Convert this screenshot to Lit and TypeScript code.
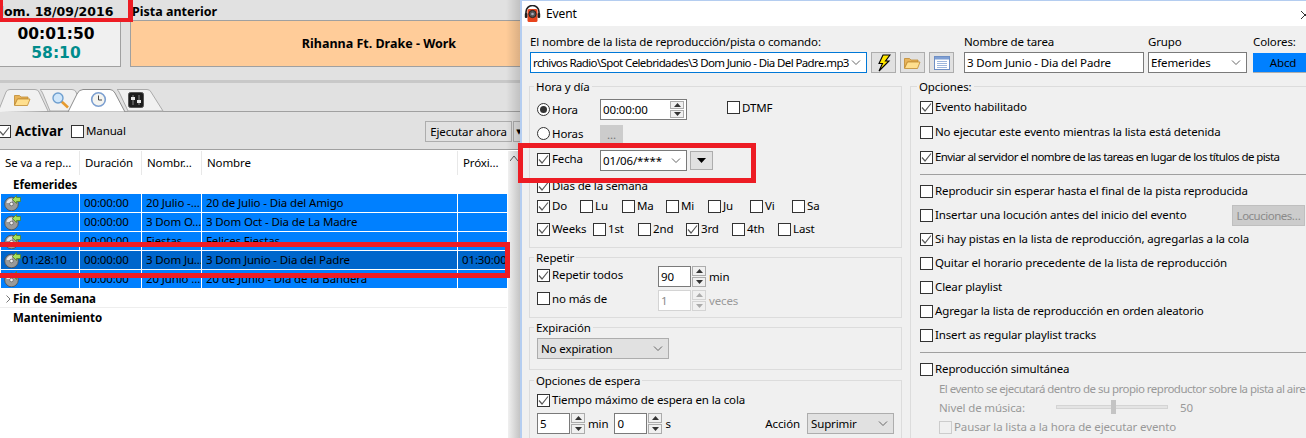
import { LitElement, html, css, svg } from 'lit';
import { customElement } from 'lit/decorators.js';

const TICK = html`<svg width="11" height="11" viewBox="0 0 11 11"><path d="M1 5.5 L4 9 L10 1.5" fill="none" stroke="#5a5a5a" stroke-width="1.2"/></svg>`;
const CHEVRON = html`<svg class="chev" width="10" height="6" viewBox="0 0 10 6"><path d="M1 .5 L5 4.5 L9 .5" fill="none" stroke="#666" stroke-width="1"/></svg>`;
const DISC = html`<svg class="disc" width="17" height="16" viewBox="0 0 17 16">
  <circle cx="7.5" cy="9" r="6.8" fill="#9a9a9a" stroke="#4c4c4c" stroke-width=".8"/>
  <path d="M2.5 8 A5.5 5.5 0 0 1 8 3.5 L8 7 A2 2 0 0 0 6 8 Z" fill="#e4e4e4"/>
  <circle cx="7.5" cy="9" r="1.8" fill="#f4f4f4" stroke="#4c4c4c" stroke-width=".6"/>
  <path d="M8.5 4.5 L12.5 .5 L12.5 2.5 L16.5 2.5 L16.5 6.5 L12.5 6.5 L12.5 8.5 Z" fill="#a6e05a" stroke="#4d7a1c" stroke-width=".7"/>
</svg>`;

const folderIcon = svg`<path d="M.5 2.5 L5.5 2.5 L7 4 L14 4 L14 6 L3.5 6 L.5 12 Z" fill="#e8b45a" stroke="#c08a30" stroke-width=".8"/>
  <path d="M3.5 6 L16 6 L13.5 12.5 L.5 12.5 Z" fill="#ffdf8e" stroke="#c08a30" stroke-width=".8"/>`;

const TABS = html`<svg class="tabs" width="170" height="23" viewBox="0 0 170 23">
  <path d="M-2 23 L6 3 Q7 .5 10 .5 L35 .5 Q38 .5 39 3 L48 22" fill="#f1f1f1" stroke="#ababab"/>
  <path d="M40 .5 L72 .5 Q75 .5 76 3 L84 22 L50 22 L43 5 Q41 .5 40 .5 Z" fill="#f1f1f1" stroke="#ababab"/>
  <path d="M117 .5 L147 .5 Q150 .5 151 3 L163 22 L128 22 L120 5 Q118 .5 117 .5 Z" fill="#f1f1f1" stroke="#ababab"/>
  <path d="M68 23 L77 5 Q79 .5 83 .5 L110 .5 Q113 .5 115 4 L125 23 Z" fill="#fff" stroke="#8c8c8c"/>
  <g transform="translate(14 4)">${folderIcon}</g>
  <g transform="translate(52 3)">
    <path d="M9 9 L16 15.5" stroke="#e69a2e" stroke-width="2.6"/>
    <circle cx="6" cy="6" r="5" fill="#cfe6fa" stroke="#6f9fcf" stroke-width="1.4"/>
  </g>
  <g transform="translate(91 3)">
    <circle cx="7.5" cy="7.5" r="6.8" fill="#f4f4f0" stroke="#7c9fd0" stroke-width="1.6"/>
    <path d="M7.5 3.5 L7.5 8 L11 8" fill="none" stroke="#444" stroke-width="1"/>
  </g>
  <g transform="translate(128 3)">
    <rect x=".5" y=".5" width="15" height="15" rx="2" fill="#1d1d1d" stroke="#555"/>
    <path d="M5 3 V13 M11 3 V13" stroke="#888" stroke-width="1"/>
    <rect x="3" y="5" width="4" height="3" fill="#e6e6e6"/>
    <rect x="9" y="8" width="4" height="3" fill="#e6e6e6"/>
  </g>
</svg>`;

const BOLT = html`<svg width="14" height="18" viewBox="0 0 14 18"><path d="M6 1 L13 1 L8.5 7 L12 7 L2 17 L5.5 9.5 L2 9.5 Z" fill="#ffe600" stroke="#000" stroke-width="1.1"/></svg>`;
const FOLDER = html`<svg width="17" height="14" viewBox="0 0 17 14">${folderIcon}</svg>`;
const LIST = html`<svg width="16" height="14" viewBox="0 0 16 14">
  <rect x=".5" y=".5" width="15" height="13" fill="#fff" stroke="#6e8fc4"/>
  <rect x="1" y="1" width="14" height="2.5" fill="#7f9fd4"/>
  <path d="M3 5.5 H13 M3 7.5 H13 M3 9.5 H13 M3 11.5 H13" stroke="#9db6dc"/>
</svg>`;
const HEADSET = html`<svg width="17" height="18" viewBox="0 0 17 18">
  <path d="M2 10 V7 A6.5 6.5 0 0 1 15 7 V10" fill="none" stroke="#222" stroke-width="1.6"/>
  <rect x="3.5" y="4" width="10" height="13" rx="1.5" fill="#e8441c"/>
  <circle cx="8.5" cy="9" r="3.6" fill="#555" stroke="#222"/>
  <circle cx="8.5" cy="9" r="1.3" fill="#aab"/>
  <rect x=".8" y="8" width="2.6" height="5" rx="1" fill="#222"/>
  <rect x="13.6" y="8" width="2.6" height="5" rx="1" fill="#222"/>
</svg>`;

type Row = { icon?: string; dur: string; file: string; name: string; next?: string; sel?: boolean };
const ROWS: Row[] = [
  { dur: '00:00:00', file: '20 Julio -…', name: '20 de Julio - Dia del Amigo' },
  { dur: '00:00:00', file: '3 Dom O…', name: '3 Dom Oct - Dia de La Madre' },
  { dur: '00:00:00', file: 'Fiestas', name: 'Felices Fiestas' },
  { icon: '01:28:10', dur: '00:00:00', file: '3 Dom Ju…', name: '3 Dom Junio - Dia del Padre', next: '01:30:00', sel: true },
  { dur: '00:00:00', file: '20 Junio …', name: '20 de Junio - Dia de la Bandera' },
];

@customElement('app-root')
export class AppRoot extends LitElement {
  static styles = css`
    :host {
      display: block;
      position: relative;
      width: 1306px;
      height: 438px;
      overflow: hidden;
      font-family: "Noto Sans", "DejaVu Sans", sans-serif;
      font-size: 11.5px;
      letter-spacing: -.13px;
      color: #000;
      background: #f0f0f0;
    }
    * { box-sizing: border-box; }
    .app { display: flex; height: 438px; }

    /* left: the playlist window behind the dialog */
    .left { width: 520px; flex: none; background: #e1e1e1; overflow: hidden; display: flex; flex-direction: column; position: relative; }
    .shade { position: absolute; top: 0; right: 0; width: 14px; height: 150px; background: linear-gradient(to right, rgba(0,0,0,0), rgba(0,0,0,.14)); }
    .head { height: 20px; flex: none; display: flex; align-items: center; font-weight: bold; font-size: 12.5px; letter-spacing: 0; white-space: nowrap; padding-top: 3px; }
    .date { width: 137px; flex: none; margin-left: -5px; font-family: "DejaVu Sans", sans-serif; }
    .boxes { height: 47px; flex: none; display: flex; gap: 9px; }
    .time { width: 122px; flex: none; margin-left: -1px; background: #f0f0f0; border: 1px solid #a0a0a0; display: flex; flex-direction: column; align-items: center; font-family: "DejaVu Sans", sans-serif; font-weight: bold; font-size: 15.5px; letter-spacing: 0; line-height: 19px; padding: 4px 8px 0 0; }
    .time .rest { color: #008c8c; }
    .track { width: 498px; flex: none; background: #ffcc99; border: 1px solid #a0a0a0; display: flex; align-items: center; justify-content: center; font-weight: bold; font-size: 12.5px; letter-spacing: 0; }
    .split { height: 3px; flex: none; margin: 13px 0 6px; background: #c8c8c8; }
    .strip { height: 23px; flex: none; border-bottom: 1px solid #a0a0a0; }
    .tabs { display: block; }
    .bar { height: 38px; flex: none; border-bottom: 1px solid #a0a0a0; display: flex; align-items: center; padding-top: 1px; }
    .bar .ck:first-child { margin-left: -2px; }
    .activar { font-weight: bold; font-size: 13.5px; letter-spacing: 0; margin: 0 8px 0 2px; }
    .btn-run { margin-left: auto; width: 87px; height: 21px; border: 1px solid #adadad; background: #e1e1e1; display: flex; align-items: center; justify-content: center; }
    .btn-more { width: 12px; height: 21px; margin-left: 1px; margin-right: -5px; border: 1px solid #adadad; background: #e1e1e1; font-size: 7px; line-height: 19px; text-align: center; }
    .table { flex: 1; background: #fff; padding-top: 1px; position: relative; }
    .cols { display: grid; grid-template-columns: 79px 62px 60px 256px 49px; margin-left: 1px; width: 506px; }
    .cols > div { white-space: nowrap; overflow: hidden; }
    .hdr { height: 24px; margin-left: 0; width: 507px; grid-template-columns: 80px 62px 60px 256px 49px; }
    .hdr > div { padding-left: 5px; line-height: 24px; border-right: 1px solid #e8e8e8; }
    .hdr > div:last-child { border-right: none; }
    .rows { display: flex; flex-direction: column; }
    .cols.line { height: 19px; background: #0080ff; border-bottom: 1px solid #fff; }
    .cols.line.sel { background: #0066cc; }
    .line > div { padding-left: 4px; line-height: 18px; border-right: 1px solid #fff; }
    .line > div:last-child { border-right: none; }
    .line > .first { padding-left: 3px; display: flex; align-items: center; gap: 1px; }
    .disc { flex: none; }
    .grp { height: 19px; padding-left: 13px; font-weight: bold; font-size: 11.5px; letter-spacing: 0; line-height: 19px; position: relative; width: 507px; }
    .grp.ruled { border-bottom: 1px solid #eee; }
    .grp .more { position: absolute; left: 6px; top: 6px; }
    .scroll { position: absolute; left: 508px; top: 1px; bottom: 0; width: 12px; background: linear-gradient(to right, #f0f0f0, #c4c4c4); }
    .scroll svg { position: absolute; left: 2px; top: 5px; }

    /* right: the Event dialog */
    .dialog { flex: 1; min-width: 0; border-left: 2px solid #b4cdf0; border-top: 1px solid #b4cdf0; overflow: hidden; display: flex; flex-direction: column; }
    .title { height: 25px; flex: none; background: #fff; display: flex; align-items: center; padding-left: 2px; gap: 5px; font-size: 12px; position: relative; }
    .close { position: absolute; right: -3px; top: 10px; }
    .top { height: 60px; flex: none; display: flex; padding: 8px 0 0 8px; }
    .fld { display: flex; flex-direction: column; flex: none; }
    .fld label { height: 18px; line-height: 16px; white-space: nowrap; }
    .box { height: 21px; border: 1px solid #7a7a7a; background: #fff; display: flex; align-items: center; padding-left: 2px; white-space: nowrap; overflow: hidden; position: relative; }
    .box.focus { border-color: #0078d7; letter-spacing: -.62px; }
    .box .chev { position: absolute; right: 5px; top: 7px; }
    .box.flat { background: #e1e1e1; border-color: #adadad; padding-left: 3px; }
    .tools { display: flex; gap: 4px; margin: 18px 0 0 4px; flex: none; }
    .tool { width: 25px; height: 21px; border: 1px solid #adadad; background: #e1e1e1; display: flex; align-items: center; justify-content: center; }
    .abcd { height: 20px; margin-top: 1px; background: #0080ff; border-bottom: 1px solid #adadad; display: flex; align-items: center; justify-content: center; }

    .body { display: flex; flex: 1; padding-left: 7px; min-height: 0; }
    .lcol { width: 373px; flex: none; display: flex; flex-direction: column; gap: 9px; }
    .rcol { width: 420px; flex: none; margin-left: 8px; }
    .group { border: 1px solid #dcdcdc; padding-left: 7px; flex: none; }
    .legend { height: 16px; line-height: 15px; margin: -8px 0 0 -3px; padding: 0 2px; width: fit-content; background: #f0f0f0; white-space: nowrap; }
    .g-hora { height: 162px; }
    .g-rep { height: 61px; }
    .g-exp { height: 43px; }
    .g-esp { height: 70px; margin-top: 1px; }
    .rcol .group { height: 370px; padding: 0 0 0 9px; border-right: none; }
    .row { display: flex; align-items: center; white-space: nowrap; }
    .h14 { height: 14px; } .h20 { height: 20px; } .h24 { height: 24px; } .h26 { height: 26px; } .h28 { height: 28px; } .h32 { height: 32px; }
    .mt1 { margin-top: 1px; } .mt2 { margin-top: 2px; } .mt4 { margin-top: 4px; }
    .ck { display: inline-flex; align-items: center; flex: none; }
    .ck i { width: 13px; height: 13px; border: 1px solid #333; background: #fff; margin-right: 2px; display: flex; align-items: center; justify-content: center; flex: none; }
    .ck .t { margin-top: -1px; }
    .ck.off { color: #999; }
    .ck.off i { border-color: #ccc; background: #f0f0f0; }
    .rd i { border-radius: 50%; position: relative; }
    .rd.on i::after { content: ""; width: 7px; height: 7px; border-radius: 50%; background: #333; }
    .cell-label { width: 63px; flex: none; }
    .days { display: grid; grid-template-columns: 43px 42px 44px 42px 42px 42px auto; align-items: center; }
    .weeks { display: grid; grid-template-columns: 56px 45px 48px 46px 46px auto; align-items: center; }
    .inp { flex: none; height: 21px; border: 1px solid #7a7a7a; background: #fff; display: flex; align-items: center; padding-left: 2px; position: relative; }
    .inp.off { border-color: #d4d4d4; color: #8a8a8a; }
    .w33 { width: 33px; } .w87 { width: 87px; } .w121 { width: 121px; flex: none; }
    .spin { flex: none; width: 14px; height: 21px; margin-left: 1px; display: flex; flex-direction: column; gap: 1px; }
    .spin b { flex: 1; border: 1px solid #acacac; background: #f0f0f0; display: flex; align-items: center; justify-content: center; }
    .spin svg { display: block; }
    .spin.off b { border-color: #d4d4d4; }
    .spin.in { position: absolute; right: 2px; top: 1px; height: 17px; margin: 0; }
    .unit { margin-left: 3px; }
    .muted { color: #999; }
    .mini { width: 23px; height: 19px; margin-left: 3px; border: 1px solid #adadad; background: #e1e1e1; display: flex; align-items: center; justify-content: center; }
    .dots { width: 23px; height: 20px; background: #ccc; display: flex; align-items: center; justify-content: center; color: #777; line-height: 10px; }
    .dtmf { margin-left: 40px; }
    .sep { height: 1px; background: #a0a0a0; margin: 5px 0 4px; }
    .loc { margin-left: auto; width: 73px; height: 21px; background: #ccc; border: 1px solid #bfbfbf; color: #8a8a8a; letter-spacing: -.5px; display: flex; align-items: center; justify-content: center; overflow: hidden; }
    .rcol .row.wide { width: 385px; }
    .tight-a { letter-spacing: -.58px; }
    .tight-b { letter-spacing: -.52px; }
    .ind { padding-left: 19px; }
    .nivel { width: 117px; flex: none; }
    .slider { width: 112px; height: 4px; background: #e4e4e4; border: 1px solid #d4d4d4; position: relative; flex: none; }
    .slider::after { content: ""; position: absolute; left: 54px; top: -6px; width: 5px; height: 14px; background: #c4c4c4; }
    .val { margin-left: 12px; }
    .accion { margin-left: auto; margin-right: 7px; }
    .w-file { width: 337px; }
    .w-task { width: 180px; margin-left: 10px; }
    .w-group { width: 99px; margin-left: 4px; }
    .w-color { width: 60px; margin-left: 6px; }
    .w-exp { width: 132px; }
    .w-act { width: 87px; margin-right: 7px; }
    .off-left { margin-left: 6px; }

    /* red marks someone drew over the screenshot */
    .mark { position: absolute; border: 5px solid #ed1c24; pointer-events: none; }
    .m-date { left: -1px; top: -4px; width: 134px; height: 26px; border-width: 4px; border-right-width: 5px; }
    .m-row { left: -8px; top: 242px; width: 518px; height: 36px; }
    .m-fecha { left: 518px; top: 143px; width: 238px; height: 40px; }
  `;

  ck(label: string, on = false, off = false) {
    return html`<span class="ck ${off ? 'off' : ''}"><i>${on ? TICK : ''}</i><span class="t">${label}</span></span>`;
  }

  rd(label: string, on = false) {
    return html`<span class="ck rd ${on ? 'on' : ''}"><i></i><span class="t">${label}</span></span>`;
  }

  spin(cls = '') {
    const tri = (d: string) => html`<svg width="7" height="4" viewBox="0 0 7 4"><path d="${d}" fill="${cls === 'off' ? '#aaa' : '#333'}"/></svg>`;
    return html`<span class="spin ${cls}"><b>${tri('M3.5 0 L7 4 L0 4 Z')}</b><b>${tri('M0 0 L7 0 L3.5 4 Z')}</b></span>`;
  }

  leftPanel() {
    return html`
      <div class="left">
        <div class="head"><span class="date">dom. 18/09/2016</span><span>Pista anterior</span></div>
        <div class="boxes">
          <div class="time"><span>00:01:50</span><span class="rest">58:10</span></div>
          <div class="track">Rihanna Ft. Drake - Work</div>
        </div>
        <div class="split"></div>
        <div class="strip">${TABS}</div>
        <div class="bar">
          ${this.ck('', true)}<span class="activar">Activar</span>
          ${this.ck('Manual')}
          <span class="btn-run">Ejecutar ahora</span><span class="btn-more">▼</span>
        </div>
        <div class="table">
          <div class="cols hdr">
            <div>Se va a rep…</div><div>Duración</div><div>Nombr…</div><div>Nombre</div><div>Próxi…</div>
          </div>
          <div class="grp">Efemerides</div>
          <div class="rows">
            ${ROWS.map(r => html`
              <div class="cols line ${r.sel ? 'sel' : ''}">
                <div class="first">${DISC}${r.icon ?? ''}</div>
                <div>${r.dur}</div><div>${r.file}</div><div>${r.name}</div><div>${r.next ?? ''}</div>
              </div>`)}
          </div>
          <div class="grp ruled"><svg class="more" width="5" height="8" viewBox="0 0 5 8"><path d="M.5 .5 L4 4 L.5 7.5" fill="none" stroke="#777"/></svg>Fin de Semana</div>
          <div class="grp">Mantenimiento</div>
          <div class="scroll"><svg width="8" height="5" viewBox="0 0 8 5"><path d="M0 5 L4 0 L8 5" fill="none" stroke="#555"/></svg></div>
        </div>
        <div class="shade"></div>
      </div>`;
  }

  horaGroup() {
    return html`
      <div class="group g-hora">
        <div class="legend">Hora y día</div>
        <div class="row h28">
          <span class="cell-label">${this.rd('Hora', true)}</span>
          <span class="inp w87">00:00:00${this.spin('in')}</span>
          <span class="dtmf">${this.ck('DTMF')}</span>
        </div>
        <div class="row h24"><span class="cell-label">${this.rd('Horas')}</span><span class="dots">…</span></div>
        <div class="row h26">
          <span class="cell-label">${this.ck('Fecha', true)}</span>
          <span class="box w87">01/06/****${CHEVRON}</span>
          <span class="mini"><svg width="9" height="5" viewBox="0 0 9 5"><path d="M0 0 H9 L4.5 5 Z"/></svg></span>
        </div>
        <div class="row h26">${this.ck('Días de la semana', true)}</div>
        <div class="days h14">
          ${this.ck('Do', true)}${this.ck('Lu')}${this.ck('Ma')}${this.ck('Mi')}${this.ck('Ju')}${this.ck('Vi')}${this.ck('Sa')}
        </div>
        <div class="weeks h32">
          ${this.ck('Weeks', true)}${this.ck('1st')}${this.ck('2nd')}${this.ck('3rd', true)}${this.ck('4th')}${this.ck('Last')}
        </div>
      </div>`;
  }

  optionsGroup() {
    return html`
      <div class="group">
        <div class="legend">Opciones:</div>
        <div class="row h24">${this.ck('Evento habilitado', true)}</div>
        <div class="row h26">${this.ck('No ejecutar este evento mientras la lista está detenida')}</div>
        <div class="row h24 tight-a">${this.ck('Enviar al servidor el nombre de las tareas en lugar de los títulos de pista', true)}</div>
        <div class="sep"></div>
        <div class="row h24">${this.ck('Reproducir sin esperar hasta el final de la pista reproducida')}</div>
        <div class="row h24 wide">${this.ck('Insertar una locución antes del inicio del evento')}<span class="loc">Locuciones…</span></div>
        <div class="row h24">${this.ck('Si hay pistas en la lista de reproducción, agregarlas a la cola', true)}</div>
        <div class="row h24">${this.ck('Quitar el horario precedente de la lista de reproducción')}</div>
        <div class="row h24">${this.ck('Clear playlist')}</div>
        <div class="row h24">${this.ck('Agregar la lista de reproducción en orden aleatorio')}</div>
        <div class="row h24">${this.ck('Insert as regular playlist tracks')}</div>
        <div class="sep"></div>
        <div class="row h24">${this.ck('Reproducción simultánea')}</div>
        <div class="row h14 ind muted tight-b">El evento se ejecutará dentro de su propio reproductor sobre la pista al aire</div>
        <div class="row h20 mt2 ind muted"><span class="nivel">Nivel de música:</span><span class="slider"></span><span class="val">50</span></div>
        <div class="row h20 ind">${this.ck('Pausar la lista a la hora de ejecutar evento', false, true)}</div>
      </div>`;
  }

  eventDialog() {
    return html`
      <div class="dialog">
        <div class="title">
          ${HEADSET}<span>Event</span>
          <svg class="close" width="8" height="8" viewBox="0 0 8 8"><path d="M0 0 L8 8 M8 0 L0 8" stroke="#333"/></svg>
        </div>
        <div class="top">
          <div class="fld w-file">
            <label>El nombre de la lista de reproducción/pista o comando:</label>
            <div class="box focus">rchivos Radio\\Spot Celebridades\\3 Dom Junio - Dia Del Padre.mp3${CHEVRON}</div>
          </div>
          <div class="tools">
            <span class="tool">${BOLT}</span><span class="tool">${FOLDER}</span><span class="tool">${LIST}</span>
          </div>
          <div class="fld w-task">
            <label>Nombre de tarea</label>
            <div class="box">3 Dom Junio - Dia del Padre</div>
          </div>
          <div class="fld w-group">
            <label>Grupo</label>
            <div class="box">Efemerides${CHEVRON}</div>
          </div>
          <div class="fld w-color">
            <label>Colores:</label>
            <div class="abcd">Abcd</div>
          </div>
        </div>
        <div class="body">
          <div class="lcol">
            ${this.horaGroup()}
            <div class="group g-rep">
              <div class="legend">Repetir</div>
              <div class="row h20">
                <span class="w121">${this.ck('Repetir todos', true)}</span>
                <span class="inp w33">90</span>${this.spin()}<span class="unit">min</span>
              </div>
              <div class="row h20 mt4">
                <span class="w121">${this.ck('no más de')}</span>
                <span class="inp w33 off">1</span>${this.spin('off')}<span class="unit muted">veces</span>
              </div>
            </div>
            <div class="group g-exp">
              <div class="legend">Expiración</div>
              <div class="row h24"><span class="box flat w-exp">No expiration${CHEVRON}</span></div>
            </div>
            <div class="group g-esp">
              <div class="legend">Opciones de espera</div>
              <div class="row h20 mt1">${this.ck('Tiempo máximo de espera en la cola', true)}</div>
              <div class="row h24 mt1">
                <span class="inp w33">5</span>${this.spin()}<span class="unit">min</span>
                <span class="inp w33 off-left">0</span>${this.spin()}<span class="unit">s</span>
                <span class="accion">Acción</span>
                <span class="box flat w-act">Suprimir${CHEVRON}</span>
              </div>
            </div>
          </div>
          <div class="rcol">${this.optionsGroup()}</div>
        </div>
      </div>`;
  }

  render() {
    return html`
      <div class="app">${this.leftPanel()}${this.eventDialog()}</div>
      <div class="mark m-date"></div>
      <div class="mark m-row"></div>
      <div class="mark m-fecha"></div>
    `;
  }
}
